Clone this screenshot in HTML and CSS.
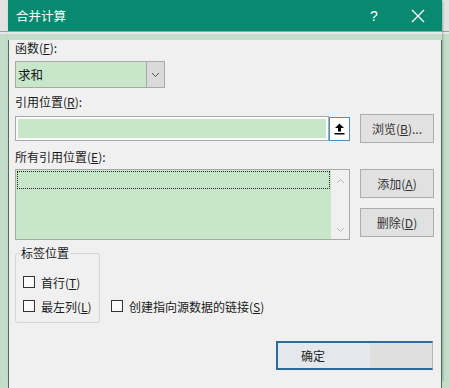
FILE: index.html
```html
<!DOCTYPE html>
<html lang="zh-CN">
  <head>
    <meta charset="UTF-8" />
    <meta name="viewport" content="width=device-width, initial-scale=1.0" />
    <title>合并计算</title>
    <link rel="stylesheet" href="styles.css">
  </head>
  <body>
    <div class="dialog">
      <div class="titlebar">
        <span class="title">合并计算</span>
        <span class="help">?</span>
        <span class="close">
          <svg width="14" height="14" viewBox="0 0 14 14">
            <path d="M1 1 L13 13 M13 1 L1 13" stroke="#fff" stroke-width="1.4" fill="none" />
          </svg>
        </span>
      </div>

      <div class="body">
        <div class="label first">函数(<u>F</u>):</div>
        <div class="select">
          <span class="select-value">求和</span>
          <span class="select-arrow">
            <svg width="9" height="6" viewBox="0 0 9 6">
              <path d="M1 1 L4.5 4.5 L8 1" stroke="#555" stroke-width="1" fill="none" />
            </svg>
          </span>
        </div>

        <div class="label">引用位置(<u>R</u>):</div>
        <div class="row">
          <div class="left ref-row">
            <div class="ref-input"><div class="fill"></div></div>
            <div class="up-btn">
              <svg width="11" height="12" viewBox="0 0 11 12">
                <path d="M5.5 0.5 L10 5 L7 5 L7 8.5 L4 8.5 L4 5 L1 5 Z" fill="#000" />
                <rect x="0.5" y="10" width="10" height="1.5" fill="#000" />
              </svg>
            </div>
          </div>
          <button class="btn">浏览(<u>B</u>)...</button>
        </div>

        <div class="label">所有引用位置(<u>E</u>):</div>
        <div class="row list-row">
          <div class="left list">
            <div class="list-area">
              <div class="list-item"></div>
            </div>
            <div class="scrollbar">
              <svg width="9" height="6" viewBox="0 0 9 6">
                <path d="M1 5 L4.5 1.5 L8 5" stroke="#b8b8b8" stroke-width="1" fill="none" />
              </svg>
              <svg width="9" height="6" viewBox="0 0 9 6">
                <path d="M1 1 L4.5 4.5 L8 1" stroke="#b8b8b8" stroke-width="1" fill="none" />
              </svg>
            </div>
          </div>
          <div class="buttons">
            <button class="btn">添加(<u>A</u>)</button>
            <button class="btn">删除(<u>D</u>)</button>
          </div>
        </div>

        <div class="options">
          <fieldset class="group">
            <legend>标签位置</legend>
            <label class="check"><span class="box"></span><span>首行(<u>T</u>)</span></label>
            <label class="check"><span class="box"></span><span>最左列(<u>L</u>)</span></label>
          </fieldset>
          <label class="check link"><span class="box"></span><span>创建指向源数据的链接(<u>S</u>)</span></label>
        </div>

        <div class="footer">
          <button class="ok">确定</button>
        </div>
      </div>
    </div>
  </body>
</html>
```

FILE: styles.css
```css
body {
  margin: 0;
  width: 449px;
  height: 388px;
  overflow: hidden;
  font-family: "Noto Sans CJK SC", "Microsoft YaHei", sans-serif;
  font-size: 12px;
  color: #1a1a1a;
  background: linear-gradient(#e2e2e2 0, #e2e2e2 31px, #9aa39e 31px, #9aa39e 32px, #e8e8e8 32px, #e8e8e8 34px, #c4ddca 34px);
}
u {
  text-decoration: underline;
  text-underline-offset: 1px;
}
.dialog {
  margin-left: 8px;
  width: 434px;
  height: 380px;
  box-shadow: 1px 1px 2px rgba(40, 70, 55, 0.35);
}
.titlebar {
  height: 31px;
  background-color: #098a70;
  color: #fff;
  display: flex;
  align-items: center;
  padding-left: 8px;
  box-sizing: border-box;
}
.title {
  font-size: 12.5px;
  flex: 1;
}
.help {
  font-family: "Liberation Sans", Arial, sans-serif;
  font-size: 14px;
  width: 12px;
  text-align: center;
  margin-right: 31px;
}
.close {
  display: flex;
  margin-right: 17px;
}
.body {
  height: 349px;
  box-sizing: border-box;
  background-color: #f0f0f0;
  border: 1px solid #55695f;
  border-top: none;
  padding: 0 7px 0 6px;
}
.label {
  line-height: 16px;
  height: 16px;
  margin-top: 6px;
}
.label.first {
  margin-top: 9px;
}
.select {
  margin-top: 5px;
  width: 150px;
  height: 27px;
  box-sizing: border-box;
  border: 1px solid #a9a9a9;
  background-color: #c8e6c9;
  display: flex;
}
.select-value {
  flex: 1;
  line-height: 25px;
  padding-left: 2px;
  font-size: 12.5px;
}
.select-arrow {
  width: 17px;
  border-left: 1px solid #a9a9a9;
  background-color: #dadada;
  display: flex;
  align-items: center;
  justify-content: center;
}
.row {
  display: flex;
  gap: 10px;
  margin-top: 4px;
  height: 29px;
  align-items: center;
}
.left {
  width: 335px;
}
.ref-row {
  display: flex;
  height: 25px;
}
.ref-input {
  flex: 1;
  border: 1px solid #a9a9a9;
  background-color: #fafafa;
  padding: 2px;
}
.fill {
  height: 100%;
  background-color: #c8e6c9;
}
.up-btn {
  width: 21px;
  height: 24px;
  box-sizing: border-box;
  margin-top: 1px;
  border: 1px solid #4f8fbf;
  background-color: #fdfdfd;
  display: flex;
  align-items: center;
  justify-content: center;
}
.btn {
  width: 74px;
  height: 29px;
  font-family: inherit;
  font-size: 12px;
  color: #333;
  background-color: #e1e1e1;
  border: 1px solid #adadad;
  padding: 0;
}
.list-row {
  height: 71px;
  align-items: flex-start;
}
.list {
  height: 71px;
  box-sizing: border-box;
  border: 1px solid #a9a9a9;
  display: flex;
}
.list-area {
  flex: 1;
  background-color: #c8e6c9;
  padding: 1px;
}
.list-item {
  height: 16px;
  border: 1px dotted #222;
}
.scrollbar {
  width: 18px;
  background-color: #f0f0f0;
  display: flex;
  flex-direction: column;
  justify-content: space-between;
  align-items: center;
  padding: 8px 0 6px;
}
.buttons {
  display: flex;
  flex-direction: column;
  gap: 10px;
}
.options {
  display: flex;
  align-items: flex-end;
  margin-top: 5px;
}
.group {
  margin: 0;
  width: 85px;
  min-width: 0;
  height: 78px;
  box-sizing: border-box;
  border: 1px solid #d6d6d6;
  border-radius: 3px;
  padding: 12px 4px 0 4px;
  display: flex;
  flex-direction: column;
  gap: 6px;
}
.group legend {
  padding: 0 1px;
  line-height: 16px;
}
.check {
  display: flex;
  align-items: center;
  gap: 6px;
  height: 18px;
  padding-left: 3px;
  white-space: nowrap;
}
.box {
  width: 12px;
  height: 12px;
  box-sizing: border-box;
  border: 1px solid #333;
  background-color: #fafafa;
}
.check.link {
  padding-left: 0;
  margin-left: 11px;
  margin-bottom: 8px;
}
.footer {
  display: flex;
  justify-content: flex-end;
  margin-top: 18px;
  padding-right: 1px;
}
.ok {
  width: 157px;
  height: 29px;
  font-family: inherit;
  font-size: 12px;
  color: #222;
  text-align: left;
  padding: 0 0 0 23px;
  background: linear-gradient(90deg, #e4e8ec 0, #e4e8ec 60%, #dfdfdf 60%);
  border: 2px solid #2d6b99;
  border-right: 1px solid #b4b4b4;
}
```
